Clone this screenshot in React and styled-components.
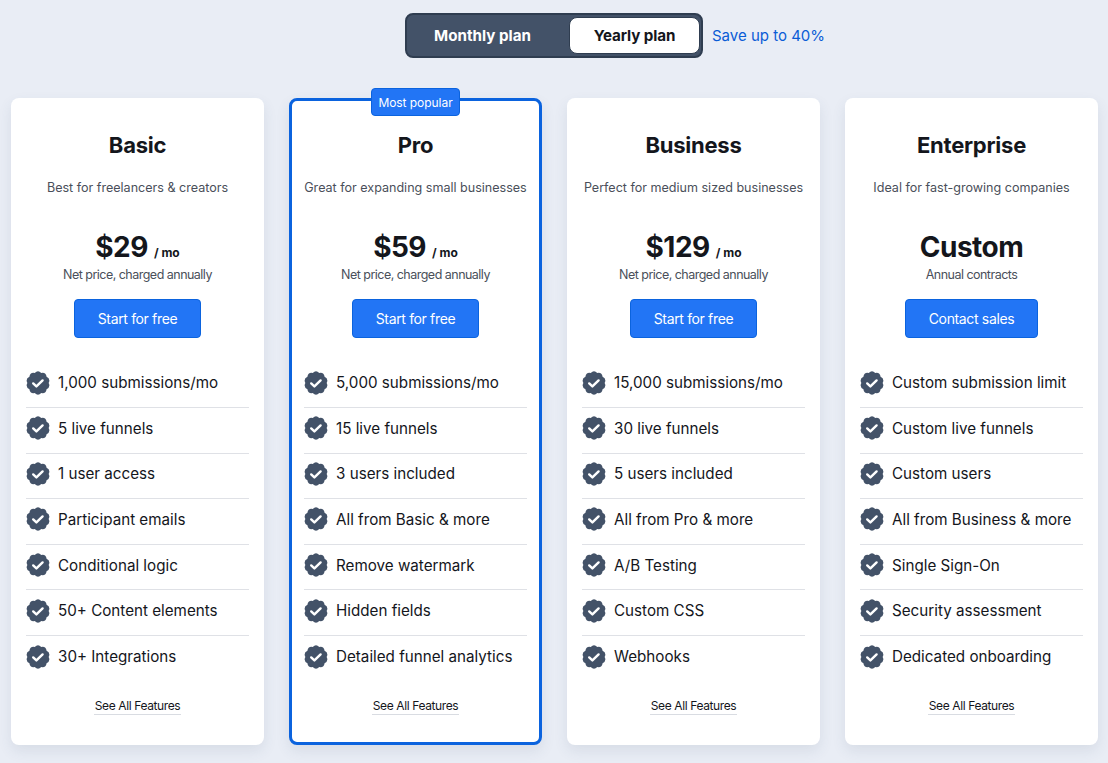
import React from "react";
import styled, { createGlobalStyle } from "styled-components";

const Global = createGlobalStyle`
  html, body { margin: 0; padding: 0; }
  body {
    background: #e9edf5;
    font-family: Inter, "Noto Sans", sans-serif;
    color: #14161c;
    -webkit-font-smoothing: antialiased;
  }
`;

const Page = styled.div`
  width: 1108px;
  height: 763px;
  overflow: hidden;
  padding-top: 13px;
  box-sizing: border-box;
`;

const Header = styled.div`
  display: flex;
  align-items: center;
  margin-left: 405px;
  gap: 9px;
`;

const Toggle = styled.div`
  width: 298px;
  height: 45px;
  box-sizing: border-box;
  display: flex;
  align-items: center;
  justify-content: space-between;
  background: #435268;
  border: 2px solid #2f3d50;
  border-radius: 8px;
  padding: 2px 1px 2px 2px;
`;

const ToggleOption = styled.div`
  height: 37px;
  display: flex;
  align-items: center;
  justify-content: center;
  box-sizing: border-box;
  width: ${(p) => (p.$active ? "131px" : "147px")};
  border-radius: 8px;
  font-size: 15.2px;
  font-weight: 700;
  letter-spacing: ${(p) => (p.$active ? "-0.1px" : "0")};
  color: ${(p) => (p.$active ? "#14161c" : "#fff")};
  background: ${(p) => (p.$active ? "#fff" : "transparent")};
  border: ${(p) => (p.$active ? "1px solid #2f3d50" : "none")};
`;

const Save = styled.span`
  font-size: 15px;
  color: #0a5cd6;
`;

const Cards = styled.div`
  display: grid;
  grid-template-columns: repeat(4, 253px);
  gap: 25px;
  margin: 40px 0 0 11px;
`;

const Card = styled.div`
  position: relative;
  height: 647px;
  box-sizing: border-box;
  background: #fff;
  border-radius: 8px;
  padding: ${(p) => (p.$featured ? "31px 12px 0" : "34px 15px 0")};
  border: ${(p) => (p.$featured ? "3px solid #0b63de" : "none")};
  box-shadow: 0 6px 14px rgba(60, 75, 110, 0.1);
  display: flex;
  flex-direction: column;
  align-items: center;
`;

const Badge = styled.div`
  position: absolute;
  top: -13px;
  left: 79px;
  width: 89px;
  height: 28px;
  display: flex;
  align-items: center;
  justify-content: center;
  box-sizing: border-box;
  background: #2275f5;
  border: 1px solid #0b63de;
  border-radius: 4px;
  color: #fff;
  font-size: 12px;
  letter-spacing: -0.05px;
  white-space: nowrap;
`;

const Title = styled.h2`
  margin: 0;
  font-size: 22px;
  line-height: 27px;
  font-weight: 700;
  letter-spacing: -0.25px;
`;

const Tagline = styled.p`
  margin: 20px 0 0;
  font-size: 12.55px;
  line-height: 17px;
  color: #4a4f5a;
  white-space: nowrap;
`;

const Price = styled.div`
  margin-top: 33px;
  height: 36px;
  display: flex;
  align-items: baseline;
  gap: 6px;
`;

const Amount = styled.span`
  font-size: 28px;
  line-height: 36px;
  font-weight: 700;
  letter-spacing: -0.5px;
`;

const Period = styled.span`
  font-size: 12px;
  font-weight: 700;
`;

const Note = styled.p`
  margin: 1px 0 0;
  font-size: 12.5px;
  line-height: 17px;
  letter-spacing: -0.52px;
  color: #4a4f5a;
`;

const Cta = styled.button`
  margin-top: 16px;
  height: 39px;
  width: ${(p) => p.$width}px;
  flex: none;
  background: #2275f5;
  border: 1px solid #0b63de;
  border-radius: 4px;
  color: #fff;
  font-family: inherit;
  font-size: 14px;
  font-weight: 400;
  letter-spacing: -0.35px;
`;

const Features = styled.ul`
  list-style: none;
  margin: 24.2px 0 0;
  padding: 0;
  width: 100%;
`;

const Feature = styled.li`
  height: 45.67px;
  box-sizing: border-box;
  padding-bottom: 4px;
  display: flex;
  align-items: center;
  gap: 8px;
  font-size: 15.2px;
  white-space: nowrap;
  border-bottom: 1px solid #dfe1e6;
  &:last-child {
    border-bottom: none;
  }
`;

const SeeAll = styled.a`
  margin-top: 16px;
  font-size: 12px;
  line-height: 15px;
  color: #14161c;
  letter-spacing: -0.38px;
  border-bottom: 1px solid #d9dce2;
  padding: 0 1px 1px;
`;

// scalloped badge outline, ten soft lobes
const badgePath = (() => {
  const lobes = 10;
  const point = (r, a) => `${(12 + r * Math.cos(a)).toFixed(2)} ${(12 + r * Math.sin(a)).toFixed(2)}`;
  const step = (Math.PI * 2) / lobes;
  let d = `M${point(10.6, -Math.PI / 2 - step / 2)}`;
  for (let i = 0; i < lobes; i++) {
    const a = -Math.PI / 2 + step * i;
    d += `Q${point(13.5, a)} ${point(10.6, a + step / 2)}`;
  }
  return d + "Z";
})();

function Check() {
  return (
    <svg width="24" height="24" viewBox="0 0 24 24" style={{ flex: "none" }}>
      <path fill="#435268" d={badgePath} />
      <path
        d="M7.2 12.4l3.2 3 6.2-6"
        fill="none"
        stroke="#fff"
        strokeWidth="2.4"
        strokeLinecap="round"
        strokeLinejoin="round"
      />
    </svg>
  );
}

const plans = [
  {
    name: "Basic",
    tagline: "Best for freelancers & creators",
    price: "$29",
    note: "Net price, charged annually",
    cta: "Start for free",
    ctaWidth: 127,
    features: ["1,000 submissions/mo", "5 live funnels", "1 user access", "Participant emails", "Conditional logic", "50+ Content elements", "30+ Integrations"],
  },
  {
    name: "Pro",
    featured: true,
    tagline: "Great for expanding small businesses",
    price: "$59",
    note: "Net price, charged annually",
    cta: "Start for free",
    ctaWidth: 127,
    features: ["5,000 submissions/mo", "15 live funnels", "3 users included", "All from Basic & more", "Remove watermark", "Hidden fields", "Detailed funnel analytics"],
  },
  {
    name: "Business",
    tagline: "Perfect for medium sized businesses",
    price: "$129",
    note: "Net price, charged annually",
    cta: "Start for free",
    ctaWidth: 127,
    features: ["15,000 submissions/mo", "30 live funnels", "5 users included", "All from Pro & more", "A/B Testing", "Custom CSS", "Webhooks"],
  },
  {
    name: "Enterprise",
    tagline: "Ideal for fast-growing companies",
    price: "Custom",
    note: "Annual contracts",
    cta: "Contact sales",
    ctaWidth: 133,
    features: ["Custom submission limit", "Custom live funnels", "Custom users", "All from Business & more", "Single Sign-On", "Security assessment", "Dedicated onboarding"],
  },
];

export default function App() {
  return (
    <Page>
      <Global />
      <Header>
        <Toggle>
          <ToggleOption>Monthly plan</ToggleOption>
          <ToggleOption $active>Yearly plan</ToggleOption>
        </Toggle>
        <Save>Save up to 40%</Save>
      </Header>
      <Cards>
        {plans.map((plan) => (
          <Card key={plan.name} $featured={plan.featured}>
            {plan.featured && <Badge>Most popular</Badge>}
            <Title>{plan.name}</Title>
            <Tagline>{plan.tagline}</Tagline>
            <Price>
              <Amount>{plan.price}</Amount>
              {plan.price !== "Custom" && <Period>/ mo</Period>}
            </Price>
            <Note>{plan.note}</Note>
            <Cta $width={plan.ctaWidth}>{plan.cta}</Cta>
            <Features>
              {plan.features.map((f) => (
                <Feature key={f}>
                  <Check />
                  {f}
                </Feature>
              ))}
            </Features>
            <SeeAll>See All Features</SeeAll>
          </Card>
        ))}
      </Cards>
    </Page>
  );
}
